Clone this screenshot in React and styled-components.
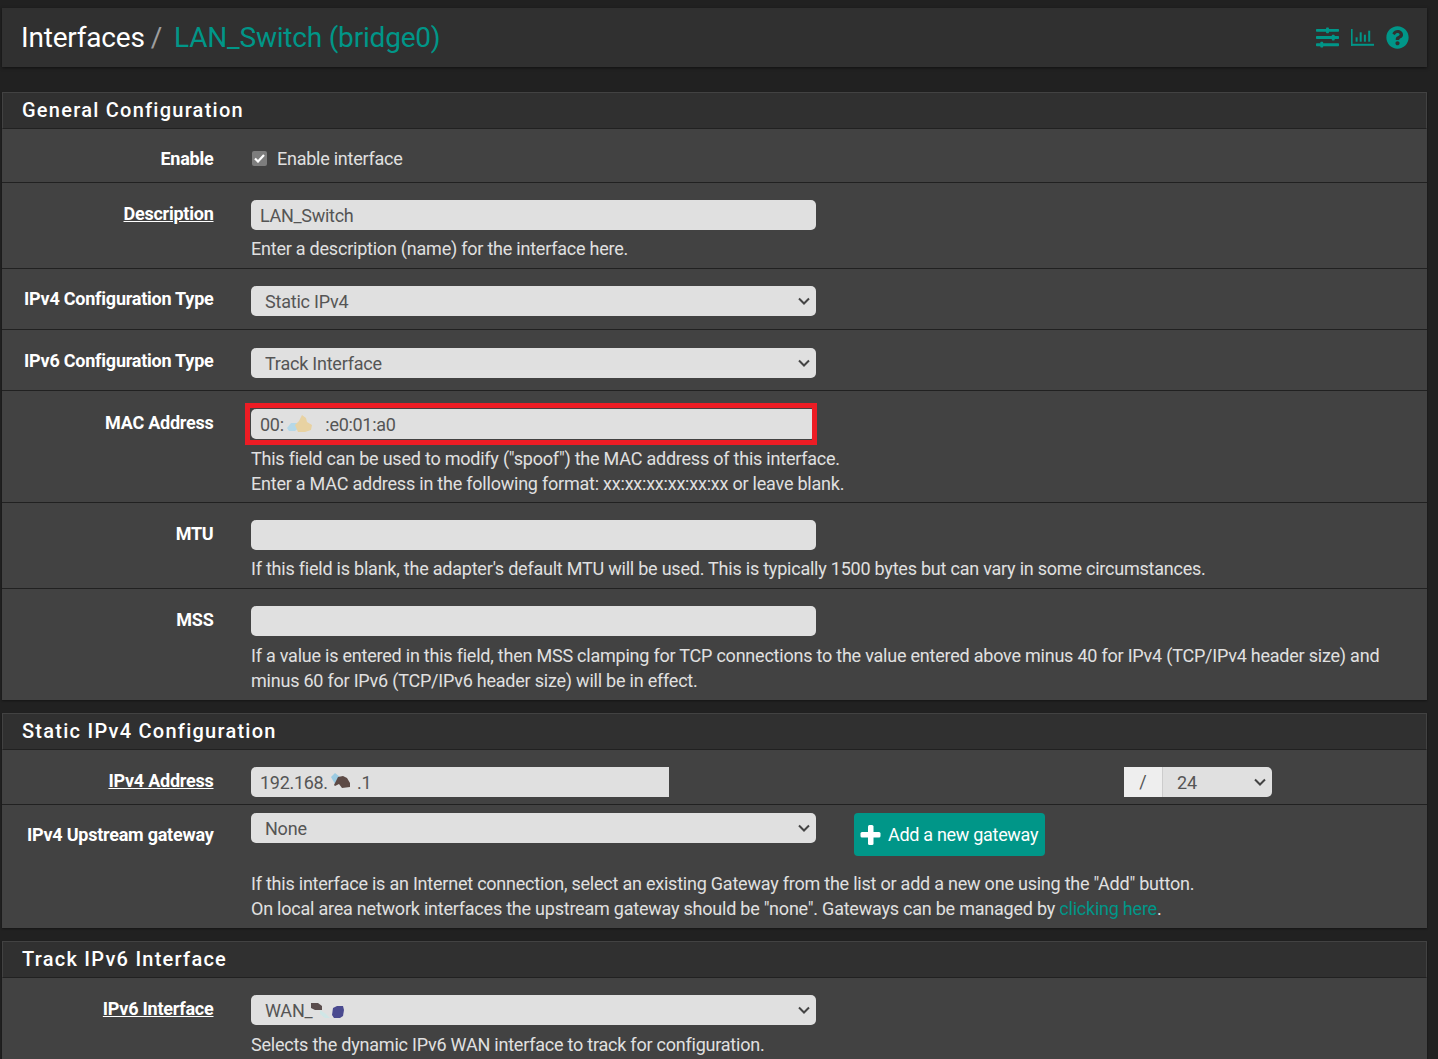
import React from "react";
import styled, {createGlobalStyle} from "styled-components";
import {FaQuestionCircle, FaSlidersH} from "react-icons/fa";

const chevron = "url(\"data:image/svg+xml,%3Csvg xmlns='http://www.w3.org/2000/svg' width='12' height='8' viewBox='0 0 12 8' fill='none' stroke='%23444' stroke-width='2'%3E%3Cpath d='M1 1.500 6 6.500 11 1.500'/%3E%3C/svg%3E\")";

const Global = createGlobalStyle`
  html, body { margin: 0; height: 100%; overflow: hidden; background: #212121; }
  body { font-family: Roboto, "Liberation Sans", sans-serif; font-size: 18px; line-height: 25px; color: #e0e0e0; }
`;

const Page = styled.div`
  display: flex;
  flex-direction: column;
  padding: 8px 11px 0 2px;
  height: 1051px;
  overflow: hidden;
`;

const TitleBar = styled.header`
  display: flex;
  align-items: center;
  justify-content: space-between;
  height: 59px;
  padding: 0 18px 0 19px;
  margin-bottom: 25px;
  background: #303030;
  box-shadow: 0 1px 3px rgba(0, 0, 0, .5);
  flex-shrink: 0;
`;

const Crumbs = styled.h1`
  margin: 0;
  font-size: 28px;
  font-weight: 400;
  line-height: 36px;
  letter-spacing: -0.2px;
  color: #fff;
`;

const Slash = styled.span`
  color: #9e9e9e;
  margin: 0 12px 0 6px;
`;

const CrumbLink = styled.a`
  color: #009688;
`;

const TitleIcons = styled.div`
  display: flex;
  align-items: center;
  gap: 12px;
  color: #009688;
`;

const Panel = styled.section`
  flex-shrink: 0;
  margin-bottom: 13px;
  background: #424242;
  box-shadow: 0 1px 2px rgba(0, 0, 0, .4);
`;

const PanelHeading = styled.h2`
  margin: 0;
  height: 37px;
  box-sizing: border-box;
  padding-left: 19px;
  font-size: 20px;
  font-weight: 500;
  line-height: 35px;
  letter-spacing: 1.25px;
  color: #fff;
  background: #303030;
  border: 1px solid #424242;
  border-bottom-color: #212121;
`;

const Row = styled.div`
  display: grid;
  grid-template-columns: 211.500px 1fr;
  column-gap: 37.500px;
  padding: ${p => p.$top || 17}px 20px ${p => p.$bottom || 7}px 0;
  box-sizing: border-box;
  & + & { border-top: 1px solid #212121; }
`;

const Label = styled.div`
  text-align: right;
  font-weight: 700;
  color: #fff;
  letter-spacing: -0.24px;
  text-decoration: ${p => p.$link ? "underline" : "none"};
  padding-top: ${p => p.$pt ?? 1}px;
`;

const Field = styled.div`
  min-width: 0;
`;

const Control = styled.div`
  position: relative;
  width: ${p => p.$w || 565}px;
`;

const TextInput = styled.input`
  display: block;
  width: 100%;
  height: 30px;
  box-sizing: border-box;
  padding: 1px 9px 0;
  border: 0;
  outline: 0;
  border-radius: ${p => p.$flat ? "5px 0 0 5px" : "5px"};
  background: #e0e0e0;
  color: #555;
  font: 18px/25px Roboto, "Liberation Sans", sans-serif;
  letter-spacing: -0.3px;
`;

const Select = styled.select`
  display: block;
  width: 100%;
  height: 30px;
  box-sizing: border-box;
  padding: 1px 24px 0 14px;
  border: 0;
  outline: 0;
  appearance: none;
  border-radius: ${p => p.$flat ? "0 5px 5px 0" : "5px"};
  background: #e0e0e0 ${chevron} no-repeat right 6px center;
  color: #555;
  font: 18px/25px Roboto, "Liberation Sans", sans-serif;
  letter-spacing: -0.22px;
`;

const Help = styled.p`
  margin: ${p => p.$mt ?? 7}px 0 0;
  color: #e0e0e0;
  letter-spacing: -0.225px;
`;

const HelpLink = styled.a`
  color: #009688;
`;

const Highlight = styled.div`
  position: absolute;
  left: -6px;
  right: -1px;
  top: -6px;
  bottom: -6px;
  border: 5px solid #ed1c24;
  pointer-events: none;
`;

const Smudge = styled.svg`
  position: absolute;
  left: ${p => p.$x}px;
  top: ${p => p.$y}px;
`;

const CheckLine = styled.label`
  display: flex;
  align-items: center;
  gap: 10px;
  margin-left: 1px;
  color: #e0e0e0;
  letter-spacing: -0.25px;
`;

const CheckBox = styled.span`
  display: flex;
  align-items: center;
  justify-content: center;
  width: 15px;
  height: 15px;
  border-radius: 2px;
  background: #7d7d7d;
`;

const IpGroup = styled.div`
  display: flex;
  justify-content: space-between;
  width: 1021px;
`;

const Cidr = styled.div`
  display: flex;
  width: 148px;
`;

const Addon = styled.span`
  flex: 0 0 39px;
  box-sizing: border-box;
  height: 30px;
  text-align: center;
  line-height: 30px;
  background: #eee;
  color: #555;
  border-right: 1px solid #ccc;
`;

const GatewayLine = styled.div`
  display: flex;
  align-items: flex-start;
  gap: 38px;
`;

const AddButton = styled.button`
  display: flex;
  align-items: center;
  gap: 6px;
  width: 191px;
  height: 43px;
  padding: 0 0 0 6px;
  box-sizing: border-box;
  border: 0;
  border-radius: 4px;
  background: #009688;
  color: #fff;
  font: 18px/25px Roboto, "Liberation Sans", sans-serif;
  letter-spacing: -0.3px;
  white-space: nowrap;
`;

const ChartIcon = () => (
    <svg width="23" height="17" viewBox="0 0 23 17" fill="currentColor">
        <rect x="0" y="0" width="1.600" height="17"/>
        <rect x="0" y="14.800" width="23" height="2"/>
        <rect x="4.600" y="8.300" width="2" height="4.400"/>
        <rect x="8.700" y="3.300" width="2" height="9.400"/>
        <rect x="12.900" y="5.700" width="2" height="7"/>
        <rect x="17.200" y="1.700" width="2" height="11"/>
    </svg>
);

const PlusIcon = () => (
    <svg width="22" height="22" viewBox="0 0 22 22" fill="#fff">
        <rect x="8" y="1" width="5.500" height="20" rx="1.500"/>
        <rect x="0.500" y="8" width="20" height="5.500" rx="1.500"/>
    </svg>
);

const Chk = () => (
    <svg width="11" height="9" viewBox="0 0 11 9" fill="none" stroke="#fff" strokeWidth="2.200">
        <path d="M1 4.500 4 7.500 10 1"/>
    </svg>
);

export default function App() {
    return (
        <Page>
            <Global/>
            <TitleBar>
                <Crumbs>Interfaces<Slash>/</Slash><CrumbLink>LAN_Switch (bridge0)</CrumbLink></Crumbs>
                <TitleIcons>
                    <FaSlidersH size={23}/>
                    <ChartIcon/>
                    <FaQuestionCircle size={23}/>
                </TitleIcons>
            </TitleBar>

            <Panel>
                <PanelHeading>General Configuration</PanelHeading>
                <Row $top={17} $bottom={11}>
                    <Label $pt={0}>Enable</Label>
                    <CheckLine><CheckBox><Chk/></CheckBox>Enable interface</CheckLine>
                </Row>
                <Row>
                    <Label $link>Description</Label>
                    <Field>
                        <Control><TextInput readOnly value="LAN_Switch"/></Control>
                        <Help $mt={6}>Enter a description (name) for the interface here.</Help>
                    </Field>
                </Row>
                <Row $bottom={13}>
                    <Label $pt={0}>IPv4 Configuration Type</Label>
                    <Control><Select defaultValue="s"><option value="s">Static IPv4</option></Select></Control>
                </Row>
                <Row $top={18} $bottom={12}>
                    <Label $pt={0}>IPv6 Configuration Type</Label>
                    <Control><Select defaultValue="t"><option value="t">Track Interface</option></Select></Control>
                </Row>
                <Row $top={18} $bottom={6}>
                    <Label>MAC Address</Label>
                    <Field>
                        <Control>
                            <TextInput readOnly value="00:          :e0:01:a0"/>
                            <Smudge $x={36} $y={6} width="26" height="18" viewBox="0 0 26 18">
                                <path d="M0 13 4 8h6l3 4-5 4H2z" fill="#b5d8e8"/>
                                <path d="M8 10l4-4 3-6 4 3 1 4 5 3-1 5-6 2h-7z" fill="#e8d2a2"/>
                            </Smudge>
                            <Highlight/>
                        </Control>
                        <Help>This field can be used to modify ("spoof") the MAC address of this interface.<br/>Enter a MAC address in the following format: xx:xx:xx:xx:xx:xx or leave blank.</Help>
                    </Field>
                </Row>
                <Row>
                    <Label>MTU</Label>
                    <Field>
                        <Control><TextInput readOnly value=""/></Control>
                        <Help $mt={6}>If this field is blank, the adapter's default MTU will be used. This is typically 1500 bytes but can vary in some circumstances.</Help>
                    </Field>
                </Row>
                <Row>
                    <Label>MSS</Label>
                    <Field>
                        <Control><TextInput readOnly value=""/></Control>
                        <Help>If a value is entered in this field, then MSS clamping for TCP connections to the value entered above minus 40 for IPv4 (TCP/IPv4 header size) and minus 60 for IPv6 (TCP/IPv6 header size) will be in effect.</Help>
                    </Field>
                </Row>
            </Panel>

            <Panel>
                <PanelHeading>Static IPv4 Configuration</PanelHeading>
                <Row>
                    <Label $link>IPv4 Address</Label>
                    <IpGroup>
                        <Control $w={418}>
                            <TextInput $flat readOnly value="192.168.       .1"/>
                            <Smudge $x={79} $y={5} width="22" height="17" viewBox="0 0 22 17">
                                <path d="M1 5 5 1l5 4-5 7z" fill="#9ccbe2"/>
                                <path d="M4 13 8 5l5-1 4 2 3 5v4l-8 1-3-4-4 2z" fill="#5d4a45"/>
                            </Smudge>
                        </Control>
                        <Cidr>
                            <Addon>/</Addon>
                            <Control $w={109}><Select $flat defaultValue="24"><option value="24">24</option></Select></Control>
                        </Cidr>
                    </IpGroup>
                </Row>
                <Row $top={8}>
                    <Label $pt={9}>IPv4 Upstream gateway</Label>
                    <Field>
                        <GatewayLine>
                            <Control><Select defaultValue="n"><option value="n">None</option></Select></Control>
                            <AddButton><PlusIcon/>Add a new gateway</AddButton>
                        </GatewayLine>
                        <Help $mt={15}>If this interface is an Internet connection, select an existing Gateway from the list or add a new one using the "Add" button.<br/>On local area network interfaces the upstream gateway should be "none". Gateways can be managed by <HelpLink>clicking here</HelpLink>.</Help>
                    </Field>
                </Row>
            </Panel>

            <Panel>
                <PanelHeading>Track IPv6 Interface</PanelHeading>
                <Row>
                    <Label $link>IPv6 Interface</Label>
                    <Field>
                        <Control>
                            <Select defaultValue="w"><option value="w">WAN_</option></Select>
                            <Smudge $x={60} $y={6} width="34" height="18" viewBox="0 0 34 18">
                                <path d="M0 2h7l4 3v4H4L0 7z" fill="#5a4d4d"/>
                                <path d="M9 9l6 4 4 4h-5l-5-4z" fill="#cfe6e6"/>
                                <path d="M22 7l4-2h6l1 4-1 6-3 2h-6l-2-3z" fill="#4a4a8f"/>
                            </Smudge>
                        </Control>
                        <Help>Selects the dynamic IPv6 WAN interface to track for configuration.</Help>
                    </Field>
                </Row>
            </Panel>
        </Page>
    );
}
